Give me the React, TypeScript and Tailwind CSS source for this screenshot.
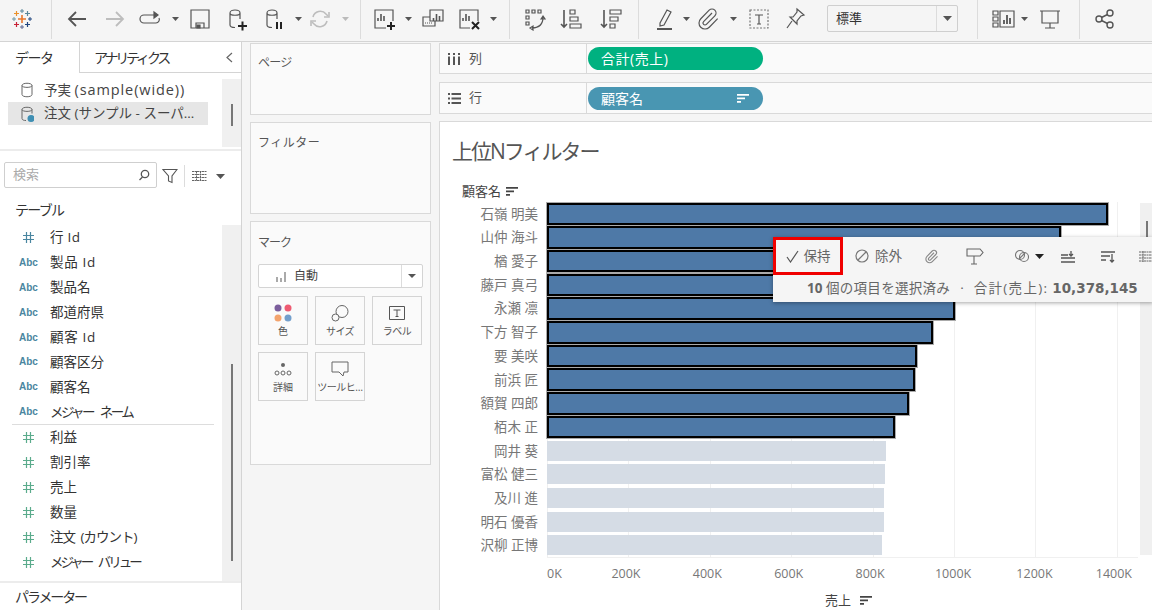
import React from "react";

const font = { fontFamily: '"Open Sans","Noto Sans CJK JP",sans-serif' };
const CLIP = "m16 6-8.414 8.586a2 2 0 0 0 2.829 2.828l8.414-8.586a4 4 0 1 0-5.657-5.657l-8.379 8.551a6 6 0 1 0 8.485 8.485l8.379-8.551";

function Ic({ c, children }: { c: string; children: React.ReactNode }) {
  return <div className={`${c} w-6 h-6 shrink-0 flex items-center justify-center`}>{children}</div>;
}
function Caret({ c, light }: { c: string; light?: boolean }) {
  return (
    <div className={`${c} w-2 shrink-0 flex justify-center`}>
      <svg width="7" height="4" viewBox="0 0 7 4"><path d="M0 0h7L3.500 4z" fill={light ? "#bbb" : "#555"} /></svg>
    </div>
  );
}
function Sep({ c }: { c: string }) {
  return <div className={`${c} w-px h-[39px] shrink-0 self-start bg-[#dcdcdc]`} />;
}
const S = (p: { children: React.ReactNode; s?: string; w?: number }) => (
  <svg width="24" height="24" viewBox="0 0 24 24" fill="none" stroke={p.s || "#555"} strokeWidth={p.w || 1.2}>{p.children}</svg>
);
function Cyl({ badge }: { badge?: React.ReactNode }) {
  return (
    <S>
      <path d="M5 6c0-4 10-4 10 0v6M5 6c0 3 10 3 10 0M5 6v12c0 1.500 2 2.500 5 2.500" />
      {badge}
    </S>
  );
}
function Logo() {
  const cross = (x: number, y: number, r: number, col: string, w: number, k: string) => (
    <path key={k} d={`M${x - r} ${y}h${2 * r}M${x} ${y - r}v${2 * r}`} stroke={col} strokeWidth={w} />
  );
  return (
    <svg width="22" height="22" viewBox="0 0 22 22" fill="none">
      {cross(11, 11, 4, "#e8762b", 1.6, "a")}
      {cross(11, 3, 2, "#5b879b", 1, "b")}
      {cross(11, 19, 2, "#5b6591", 1, "c")}
      {cross(3, 11, 2, "#7099a6", 1, "d")}
      {cross(19, 11, 2, "#1f457e", 1, "e")}
      {cross(5.500, 5.500, 2.500, "#eb912b", 1.2, "f")}
      {cross(16.500, 5.500, 2.500, "#59879b", 1.2, "g")}
      {cross(5.500, 16.500, 2.500, "#c72035", 1.2, "h")}
      {cross(16.500, 16.500, 2.500, "#1f447e", 1.2, "i")}
    </svg>
  );
}
function Chart3({ x = 0 }: { x?: number }) {
  return <path d={`M${9 + x} 14v-3M${12 + x} 14V7M${15 + x} 14v-5`} strokeWidth="1.600" />;
}
function Toolbar() {
  return (
    <div className="h-[42px] shrink-0 flex items-center pb-[4px] bg-[#f5f5f5] border-b border-[#d4d4d4]">
      <Ic c="ml-[10px]"><Logo /></Ic>
      <Sep c="ml-[17px]" />
      <Ic c="ml-[13px]"><S w={1.800}><path d="M21 12H4M11 5l-7 7 7 7" /></S></Ic>
      <Ic c="ml-[14px]"><S s="#bdbdbd" w={1.800}><path d="M3 12h17M13 5l7 7-7 7" /></S></Ic>
      <Ic c="ml-[12px]"><S><path d="M16 8H5a3.500 3.500 0 0 0 0 8h12a3.500 3.500 0 0 0 3-5" /><path d="M15 5l4 3-4 3z" fill="#555" /></S></Ic>
      <Caret c="ml-[8px]" />
      <Ic c="ml-[9px]"><S><path d="M3 3h18v18H3zM8 21v-5h8v5" /><path d="M9 18h3v3H9z" fill="#555" /></S></Ic>
      <Ic c="ml-[13px]"><Cyl badge={<path d="M13 19h9M17.500 14.500v9" stroke="#222" strokeWidth="2" />} /></Ic>
      <Ic c="ml-[13px]"><Cyl badge={<path d="M15 15v7M19 15v7" stroke="#222" strokeWidth="2" />} /></Ic>
      <Caret c="ml-[8px]" />
      <Ic c="ml-[6px]"><S s="#bdbdbd" w={1.600}><path d="M5 10a7.500 7.500 0 0 1 13-3l2 2M19 14a7.500 7.500 0 0 1-13 3l-2-2" /><path d="M21 5v5h-5M3 19v-5h5" /></S></Ic>
      <Caret c="ml-[9px]" light />
      <Sep c="ml-[11px]" />
      <Ic c="ml-[11px]"><S><path d="M14 21H3V3h18v11" /><Chart3 x={-3} /><path d="M15 19h8M19 15v8" stroke="#222" strokeWidth="2" /></S></Ic>
      <Caret c="ml-[8px]" />
      <Ic c="ml-[9px]"><S><path d="M9 14V3h13v11H9z" /><Chart3 x={3.500} /><path d="M9 10H2v9h12v-5" /><path d="M4 16h8" strokeDasharray="1 1" /></S></Ic>
      <Ic c="ml-[12px]"><S><path d="M13 21H3V3h18v11" /><Chart3 x={-3} /><path d="M15 15l7 7M22 15l-7 7" stroke="#222" strokeWidth="2" /></S></Ic>
      <Caret c="ml-[8px]" />
      <Sep c="ml-[12px]" />
      <Ic c="ml-[13px]"><S><path d="M3 3h3v3H3zM9 3h3v3H9zM15 3h3v3h-3zM3 9h3v3H3zM3 15h3v3H3zM9 21c6 0 11-3 11-11M7 21l3-2v4zM18 12l2-3 2 3z" /></S></Ic>
      <Ic c="ml-[12px]"><S><path d="M5 3v17M2 17l3 3 3-3" strokeWidth="1.600" /><path d="M11 3h5v4h-5zM11 10h8v4h-8zM11 17h11v4H11z" /></S></Ic>
      <Ic c="ml-[16px]"><S><path d="M5 3v17M2 17l3 3 3-3" strokeWidth="1.600" /><path d="M11 3h11v4H11zM11 10h8v4h-8zM11 17h5v4h-5z" /></S></Ic>
      <Sep c="ml-[15px]" />
      <Ic c="ml-[14px]"><S><path d="M7 16L14 3l4 2-7 13-4 1z" /><path d="M4 22h15" strokeWidth="2" /></S></Ic>
      <Caret c="ml-[5px]" />
      <Ic c="ml-[6px]"><S><path d={CLIP} /></S></Ic>
      <Caret c="ml-[9px]" />
      <Ic c="ml-[10px]"><S><path d="M3 3h18v18H3z" strokeDasharray="2 1.500" stroke="#777" /><path d="M8 8h8M12 8v9M10 17h4" /></S></Ic>
      <Ic c="ml-[12px]"><S><path d="M14 2l7 6-3 1-4 5 0 3-7-7 3 0 4-5zM9 14l-5 7" /></S></Ic>
      <div className="ml-[20px] w-[131px] h-[27px] shrink-0 flex items-center bg-[#f5f5f5] border border-[#cfcfcf] rounded-[2px]">
        <span className="pl-2 flex-1 text-[13px] text-[#333]">標準</span>
        <div className="w-[21px] h-full flex items-center justify-center border-l border-[#dcdcdc]">
          <svg width="9" height="5" viewBox="0 0 9 5"><path d="M0 0h9L4.500 5z" fill="#555" /></svg>
        </div>
      </div>
      <Sep c="ml-[19px]" />
      <Ic c="ml-[14px]"><S><path d="M1 4h5v4H1zM1 10h5v4H1zM1 16h5v4H1zM8 4h14v16H8z" /><path d="M12 17v-4M15 17V8M18 17v-6" strokeWidth="1.800" /></S></Ic>
      <Caret c="ml-[4px]" />
      <Ic c="ml-[10px]"><S><path d="M2 4h20M4 4v12h16V4M12 16v5M7 21h10" /></S></Ic>
      <Sep c="ml-[17px]" />
      <Ic c="ml-[13px]"><S w={1.400}><circle cx="6" cy="12" r="3" /><circle cx="17" cy="6" r="3" /><circle cx="17" cy="18" r="3" /><path d="M8.500 10.500l6-3M8.500 13.500l6 3" /></S></Ic>
    </div>
  );
}

function Abc() {
  return <span className="text-[10px] font-bold text-[#4a86a0]" style={{ fontFamily: '"Liberation Sans",sans-serif' }}>Abc</span>;
}
function Hash({ color }: { color: string }) {
  return (
    <svg width="13" height="13" viewBox="0 0 13 13" fill="none" stroke={color} strokeWidth="1.200">
      <path d="M4.500 1v11M8.500 1v11M1 4.500h11M1 8.500h11" />
    </svg>
  );
}
function Field({ k, name, t = "" }: { k: "abc" | "dim" | "mea"; name: string; t?: string }) {
  return (
    <div className="h-[24.9px] flex items-center text-[13.5px] text-[#333]">
      <div className="w-[39px] ml-[11px] pl-[8px] flex justify-start items-center">
        {k === "abc" ? <Abc /> : <div className="pl-[3px] flex"><Hash color={k === "dim" ? "#4a86a0" : "#5bab8c"} /></div>}
      </div>
      <span className={`whitespace-nowrap ${t}`}>{name}</span>
    </div>
  );
}

function LeftPanel() {
  return (
    <div className="w-[242px] shrink-0 flex flex-col bg-white border-r border-[#d4d4d4]">
      <div className="h-[31px] shrink-0 flex text-[14px] text-[#333]">
        <div className="w-[80px] pl-[15px] flex items-center border-r border-[#d4d4d4]"><span className="tracking-[-1.500px]">データ</span></div>
        <div className="flex-1 flex items-center pl-[14px] border-b border-[#d4d4d4]">
          <span className="flex-1 tracking-[-3.200px]">アナリティクス</span>
          <svg className="mr-[8px]" width="7" height="11" viewBox="0 0 7 11" fill="none" stroke="#666" strokeWidth="1.200"><path d="M6 1L1 5.500 6 10" /></svg>
        </div>
      </div>
      <div className="h-[78px] shrink-0 flex border-b-2 border-[#ececec]">
        <div className="w-[222px] pl-[8px] pt-[4px] text-[13.5px] text-[#444]">
          <div className="h-[25px] w-[200px] flex items-center pl-[12px] gap-[10px]">
            <svg width="14" height="16" viewBox="0 0 14 16" fill="none" stroke="#666"><path d="M2 3.500c0-3 10-3 10 0v9c0 3-10 3-10 0zM2 3.500c0 2.500 10 2.500 10 0" /></svg>
            <span className="whitespace-nowrap">予実 <span className="text-[14.500px] tracking-[0.900px]">(sample(wide))</span></span>
          </div>
          <div className="h-[23px] w-[200px] flex items-center pl-[12px] gap-[10px] bg-[#e6e6e6]">
            <svg width="14" height="16" viewBox="0 0 14 16" fill="none" stroke="#666"><path d="M2 3.500c0-3 10-3 10 0v4M2 3.500c0 2.500 10 2.500 10 0M2 3.500v9c0 1.500 2 2 4 2" /><circle cx="11" cy="12.500" r="3.500" fill="#3f8fb3" stroke="none" /></svg>
            <span className="whitespace-nowrap">注文 (サンプル - スーパ…</span>
          </div>
        </div>
        <div className="w-[19px] mt-[6px] mb-[2px] bg-[#f0f0f0] flex justify-center pt-[25px]">
          <div className="w-[2px] h-[22px] bg-[#777]" />
        </div>
      </div>
      <div className="h-[37px] shrink-0 flex items-end pl-[4px]">
        <div className="w-[153px] h-[26px] flex items-center pl-[8px] pr-[6px] border border-[#cfcfcf] rounded-[2px] text-[13px] text-[#aaa]">
          <span className="flex-1">検索</span>
          <svg width="12" height="12" viewBox="0 0 12 12" fill="none" stroke="#555" strokeWidth="1.300"><circle cx="7" cy="5" r="3.700" /><path d="M4.500 8L1.500 11" /></svg>
        </div>
        <svg className="ml-[5px] mb-[4px]" width="16" height="16" viewBox="0 0 16 16" fill="none" stroke="#555" strokeWidth="1.100"><path d="M1 1.500h14L10 8v6.500L6.500 13V8z" /></svg>
        <div className="ml-[6px] mb-[1px] w-px h-[22px] bg-[#dcdcdc]" />
        <svg className="ml-[7px] mb-[6px]" width="15" height="12" viewBox="0 0 15 12" fill="none" stroke="#666"><path d="M0 1.500h15M0 4.500h15M0 7.500h15M0 10.500h15M4.500 1v10M8.500 1v10" strokeDasharray="2 0.500" /></svg>
        <svg className="ml-[9px] mb-[9px]" width="9" height="5" viewBox="0 0 9 5"><path d="M0 0h9L4.500 5z" fill="#555" /></svg>
      </div>
      <div className="h-[37px] shrink-0 pl-[15px] flex items-center text-[14px] text-[#333] pt-[5px]"><span className="tracking-[-1.700px]">テーブル</span></div>
      <div className="flex-1 flex min-h-0 border-b-2 border-[#ececec]">
        <div className="w-[222px] flex flex-col">
          <Field k="dim" name="行 Id" t="tracking-[0.300px]" />
          <Field k="abc" name="製品 Id" t="tracking-[0.700px]" />
          <Field k="abc" name="製品名" />
          <Field k="abc" name="都道府県" />
          <Field k="abc" name="顧客 Id" t="tracking-[0.700px]" />
          <Field k="abc" name="顧客区分" />
          <Field k="abc" name="顧客名" />
          <Field k="abc" name="メジャー ネーム" t="tracking-[-2.600px] [word-spacing:6px]" />
          <div className="h-0 ml-[12px] w-[202px] border-t border-[#dddddd]" />
          <Field k="mea" name="利益" />
          <Field k="mea" name="割引率" />
          <Field k="mea" name="売上" />
          <Field k="mea" name="数量" />
          <Field k="mea" name="注文 (カウント)" t="tracking-[-1px] [word-spacing:3px]" />
          <Field k="mea" name="メジャー バリュー" t="tracking-[-3px] [word-spacing:6px]" />
        </div>
        <div className="w-[19px] bg-[#f0f0f0] flex justify-center pt-[139px]">
          <div className="w-[2px] h-[197px] bg-[#777]" />
        </div>
      </div>
      <div className="h-[27px] shrink-0 pl-[15px] flex items-center text-[14px] text-[#333]"><span className="tracking-[-2.100px]">パラメーター</span></div>
    </div>
  );
}

function MarkBtn({ label, t = "", children }: { label: string; t?: string; children: React.ReactNode }) {
  return (
    <div className="w-[50px] h-[49px] flex flex-col items-center justify-between py-[6px] border border-[#d4d4d4] text-[10px] text-[#555]">
      <div className="h-[20px] flex items-center">{children}</div>
      <span className={`leading-[14px] whitespace-nowrap ${t}`}>{label}</span>
    </div>
  );
}
function MiddleColumn() {
  return (
    <div className="w-[197px] shrink-0 pl-[8px] pt-[1px] flex flex-col gap-[7px]">
      <div className="w-[181px] h-[72px] pl-[7px] pt-[10px] bg-[#fafafa] border border-[#d9d9d9] text-[12px] text-[#555]"><span className="tracking-[-0.800px]">ページ</span></div>
      <div className="w-[181px] h-[92px] pl-[7px] pt-[11px] bg-[#fafafa] border border-[#d9d9d9] text-[12px] text-[#555]"><span className="tracking-[0.500px]">フィルター</span></div>
      <div className="w-[181px] h-[244px] px-[7px] pt-[12px] bg-[#fafafa] border border-[#d9d9d9]">
        <div className="text-[12px] leading-[18px] text-[#555] tracking-[-1px]">マーク</div>
        <div className="mt-[12px] h-[24px] w-[165px] flex items-center bg-white border border-[#d4d4d4] rounded-[2px] text-[12px] text-[#444]">
          <svg className="ml-[16px] mr-[7px]" width="12" height="11" viewBox="0 0 12 11" fill="none" stroke="#aaa" strokeWidth="2"><path d="M2 11V6M6 11V7M10 11V1" /></svg>
          <span className="flex-1">自動</span>
          <div className="w-[21px] h-full flex items-center justify-center border-l border-[#dcdcdc]">
            <svg width="8" height="4" viewBox="0 0 8 4"><path d="M0 0h8L4 4z" fill="#555" /></svg>
          </div>
        </div>
        <div className="mt-[8px] grid grid-cols-[50px_50px_50px] gap-x-[7px] gap-y-[7px]">
          <MarkBtn label="色">
            <svg width="18" height="18" viewBox="0 0 18 18"><circle cx="4" cy="4" r="3.500" fill="#7b5e9c" /><circle cx="14" cy="4" r="3.500" fill="#ee5b72" /><circle cx="4" cy="14" r="3.500" fill="#f3a36d" /><circle cx="14" cy="14" r="3.500" fill="#739fcc" /></svg>
          </MarkBtn>
          <MarkBtn label="サイズ" t="tracking-[-0.500px]">
            <svg width="18" height="18" viewBox="0 0 18 18" fill="none" stroke="#666"><circle cx="11" cy="7.500" r="6" /><circle cx="4.500" cy="13.500" r="3.500" fill="#fafafa" /></svg>
          </MarkBtn>
          <MarkBtn label="ラベル" t="tracking-[-0.500px]">
            <svg width="16" height="14" viewBox="0 0 16 14" fill="none" stroke="#555"><path d="M.5.500h15v13H.5z" /><path d="M4.500 4h7M8 4v6.500M6.500 10.500h3" /></svg>
          </MarkBtn>
          <MarkBtn label="詳細">
            <svg width="18" height="14" viewBox="0 0 18 14" fill="none" stroke="#666"><circle cx="9" cy="3" r="2" fill="#666" stroke="none" /><circle cx="3" cy="11" r="2" /><circle cx="9" cy="11" r="2" /><circle cx="15" cy="11" r="2" /></svg>
          </MarkBtn>
          <MarkBtn label="ツールヒ…" t="tracking-[-0.500px]">
            <svg width="18" height="16" viewBox="0 0 18 16" fill="none" stroke="#666"><path d="M1 1h16v10h-4l-1 4-4-4H1z" /></svg>
          </MarkBtn>
        </div>
      </div>
    </div>
  );
}

function SortIcon({ color = "#444" }: { color?: string }) {
  return (
    <svg width="13" height="9" viewBox="0 0 13 9"><path d="M0 0h12v1.800H0zM0 3.500h8v1.800H0zM0 7h4v1.800H0z" fill={color} /></svg>
  );
}
function Shelf({ label, icon, pill, color, sort, h, t = "" }: { label: string; icon: React.ReactNode; pill: string; color: string; sort?: boolean; h: string; t?: string }) {
  return (
    <div className={`${h} flex bg-[#fafafa] border border-[#d9d9d9] border-r-0`}>
      <div className="w-[147px] shrink-0 pl-[8px] flex items-center gap-[8px] border-r border-[#d9d9d9] text-[13px] text-[#555]">
        {icon}<span>{label}</span>
      </div>
      <div className="pl-[1px] flex items-center">
        <div className={`w-[175px] h-[23px] rounded-full flex items-center justify-between pl-[13px] pr-[13px] text-[14px] text-white ${color}`}>
          <span className={t}>{pill}</span>
          {sort && <SortIcon color="#fff" />}
        </div>
      </div>
    </div>
  );
}

const rows: [string, number, boolean][] = [
  ["石嶺 明美", 1378, true], ["山仲 海斗", 1262, true], ["楢 愛子", 1130, true], ["藤戸 真弓", 1040, true], ["永瀬 凛", 1002, true],
  ["下方 智子", 948, true], ["要 美咲", 908, true], ["前浜 匠", 903, true], ["額賀 四郎", 890, true], ["栢木 正", 855, true],
  ["岡井 葵", 832, false], ["富松 健三", 830, false], ["及川 進", 827, false], ["明石 優香", 827, false], ["沢柳 正博", 824, false],
];
const ticks = ["0K", "200K", "400K", "600K", "800K", "1000K", "1200K", "1400K"];
const K = 81.4 / 200;

function Chart() {
  return (
    <div className="flex-1 min-h-0 flex flex-col pt-[11px] bg-white border border-[#d9d9d9] border-r-0 border-b-0 relative overflow-hidden">
      <div className="pl-[12px] text-[21px] leading-[36px] text-[#555] tracking-[-2px]">上位Nフィルター</div>
      <div className="pl-[22px] mt-[14px] h-[17px] flex items-center gap-[5px] text-[13px] text-[#444]">顧客名 <SortIcon /></div>
      <div className="flex mt-[2px]">
        <div className="w-[98px] shrink-0 flex flex-col items-end text-[13.5px] text-[#777]">
          {rows.map((r) => (
            <div key={r[0]} className="h-[23.7px] flex items-center whitespace-nowrap">{r[0]}</div>
          ))}
        </div>
        <div className="ml-[9px] w-[591px] relative border-b border-[#f0f0f0]">
          {ticks.map((t, i) => (
            <div key={t} className="absolute top-0 bottom-0 w-px bg-[#f0f0f0]" style={{ left: i * 81.4 }} />
          ))}
          {rows.map((r) => (
            <div key={r[0]} className="relative h-[23.7px] flex items-center">
              {r[2] ? (
                <div className="h-[22.500px] bg-[#4e79a7] border-2 border-black outline outline-1 outline-[#aaa]" style={{ width: r[1] * K }} />
              ) : (
                <div className="h-[20px] bg-[#d5dce5]" style={{ width: r[1] * K }} />
              )}
            </div>
          ))}
        </div>
      </div>
      <div className="flex pl-[107px] h-[33px] items-center text-[12.5px] text-[#777]">
        {ticks.map((t, i) => (
          <div key={t} className={`w-[81.4px] shrink-0 flex ${i === 0 ? "" : i < 5 ? "-ml-[17px] mr-[17px]" : i === 7 ? "-ml-[21px] mr-[21px]" : "-ml-[19px] mr-[19px]"}`}>{t}</div>
        ))}
      </div>
      <div className="h-[20px] pl-[385px] flex items-center gap-[9px] text-[13px] text-[#444]">売上 <SortIcon /></div>
      <Tip />
      <div className="absolute left-[700px] top-[81px] w-[13px] h-[352px] bg-[#f0f0f0] flex justify-center pt-[18px]">
        <div className="w-[2px] h-[18px] bg-[#777]" />
      </div>
    </div>
  );
}

function Tip() {
  return (
    <div className="absolute z-10 left-[333px] top-[115px] w-[380px] h-[65px] flex flex-col bg-[#f5f5f5] shadow-[0_1px_4px_rgba(0,0,0,0.35)] text-[#666]">
      <div className="h-[38px] flex items-center text-[13.5px]">
        <div className="w-[70px] h-[38px] flex items-center justify-center gap-[5px] border-[3px] border-[#f00000]">
          <svg width="13" height="13" viewBox="0 0 13 13" fill="none" stroke="#555" strokeWidth="1.200"><path d="M1 7l3.500 5L12 1" /></svg>
          <span>保持</span>
        </div>
        <div className="ml-[12px] flex items-center gap-[6px]">
          <svg width="14" height="14" viewBox="0 0 14 14" fill="none" stroke="#777" strokeWidth="1.200"><circle cx="7" cy="7" r="6" /><path d="M3 11l8-8" /></svg>
          <span>除外</span>
        </div>
        <svg className="ml-[22px]" width="15" height="15" viewBox="0 0 24 24" fill="none" stroke="#888" strokeWidth="1.800"><path d={CLIP} /></svg>
        <svg className="ml-[27px]" width="18" height="18" viewBox="0 0 18 18" fill="none" stroke="#666" strokeWidth="1.100"><path d="M1 2h13l3 3.500L14 9H1zM8 9v8M5 17h6" /></svg>
        <svg className="ml-[31px]" width="14" height="14" viewBox="0 0 14 14" fill="none" stroke="#777" strokeWidth="1.100"><circle cx="5" cy="6" r="4.500" /><circle cx="9" cy="8" r="4.500" /><path d="M4 10l6-6" /></svg>
        <svg className="ml-[6px]" width="9" height="5" viewBox="0 0 9 5"><path d="M0 0h9L4.500 5z" fill="#222" /></svg>
        <svg className="ml-[17px]" width="14" height="13" viewBox="0 0 14 13" fill="none" stroke="#555" strokeWidth="1.300"><path d="M0 5h7M0 8h14M0 12h14M10 1v5M8 4l2 2 2-2" /></svg>
        <svg className="ml-[26px]" width="14" height="13" viewBox="0 0 14 13" fill="none" stroke="#555" strokeWidth="1.300"><path d="M0 2h14M0 6h9M0 10h5M11 4v8M9 10l2 2 2-2" /></svg>
        <svg className="ml-[24px]" width="14" height="13" viewBox="0 0 14 13" fill="none" stroke="#666"><path d="M0 2h14M0 5h14M0 8h14M0 11h14M4 1v11" strokeDasharray="2 .5" /></svg>
      </div>
      <div className="flex-1 pl-[34px] flex items-center text-[13.5px] whitespace-nowrap">
        <b className="font-bold">10</b>&nbsp;<span className="tracking-[0.300px]">個の項目を選択済み</span>
        <span className="mx-[10px]">·</span>
        <span className="tracking-[1.300px]">合計(売上):</span>
        <b className="ml-[4px] text-[13.500px] font-bold" style={{ fontFamily: '"DejaVu Sans",sans-serif' }}>10,378,145</b>
      </div>
    </div>
  );
}

function RightColumn() {
  return (
    <div className="flex-1 min-w-0 pt-[1px] flex flex-col">
      <Shelf h="h-[31px] mb-[8px]" t="tracking-[0.500px]" label="列" color="bg-[#00b180]" pill="合計(売上)" icon={
        <svg width="13" height="12" viewBox="0 0 13 12" fill="#555"><path d="M0 0h2v2H0zM5 0h2v2H5zM10 0h2v2h-2zM0 3.500h2V12H0zM5 3.500h2V12H5zM10 3.500h2V12h-2z" /></svg>
      } />
      <Shelf h="h-[32px] mb-[7px]" label="行" color="bg-[#4996b2]" pill="顧客名" sort icon={
        <svg width="13" height="11" viewBox="0 0 13 11" fill="#555"><path d="M0 0h2v2H0zM0 4.500h2v2H0zM0 9h2v2H0zM3.500 0H13v2H3.500zM3.500 4.500H13v2H3.500zM3.500 9H13v2H3.500z" /></svg>
      } />
      <Chart />
    </div>
  );
}

export default function App() {
  return (
    <div className="w-[1152px] h-[610px] overflow-hidden flex flex-col bg-[#f5f5f5]" style={font}>
      <Toolbar />
      <div className="flex-1 min-h-0 flex">
        <LeftPanel />
        <MiddleColumn />
        <RightColumn />
      </div>
    </div>
  );
}
